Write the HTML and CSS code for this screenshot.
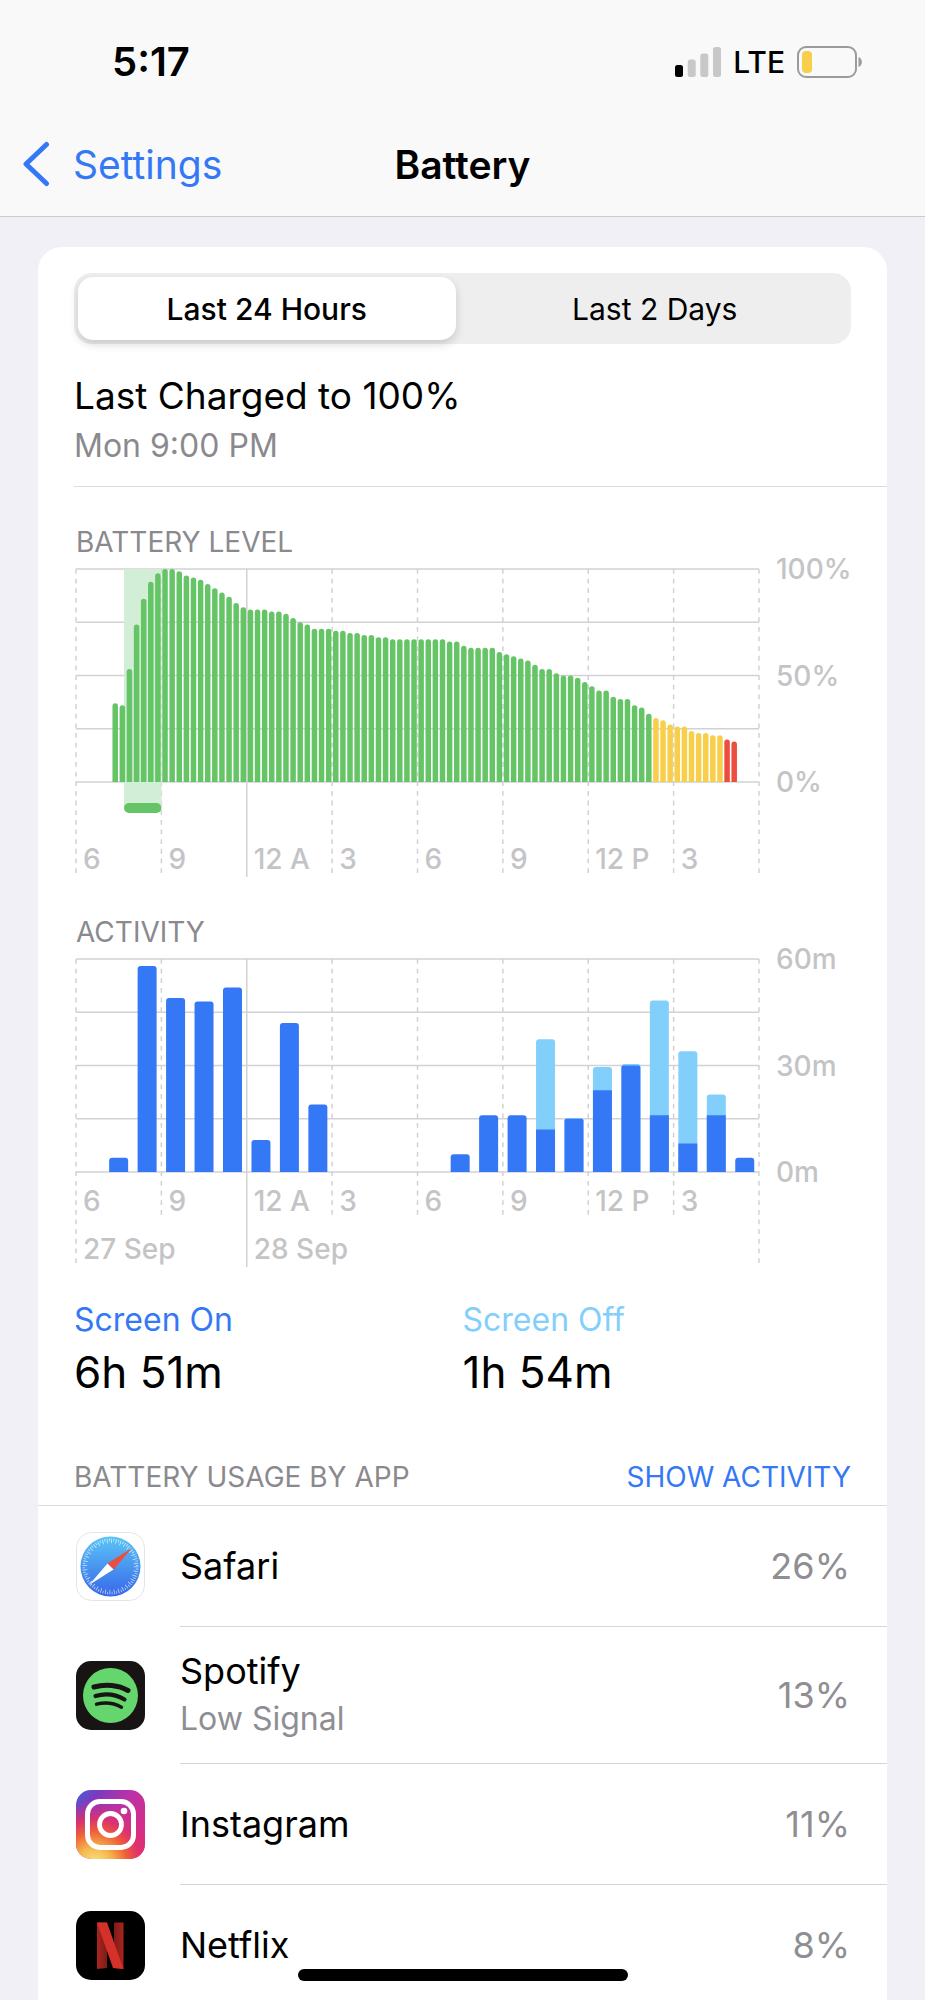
FILE: index.html
```html
<!DOCTYPE html>
<html lang="en">
<head>
    <meta charset="UTF-8">
    <meta name="viewport" content="width=device-width, initial-scale=1.0">
    <title>Battery</title>
    <link rel="stylesheet" href="styles.css">
</head>
<body>
    <div class="screen">
        <header class="top">
            <div class="status-bar">
                <span class="clock">5:17</span>
                <div class="status-icons">
                    <svg class="signal" viewBox="0 0 46 30" aria-hidden="true">
                        <rect x="0" y="18" width="8" height="12" rx="2.5" fill="#000"/>
                        <rect x="12.7" y="12.5" width="8" height="17.5" rx="2.5" fill="#c8c8c8"/>
                        <rect x="25.3" y="6.5" width="8" height="23.5" rx="2.5" fill="#c8c8c8"/>
                        <rect x="38" y="0" width="8" height="30" rx="2.5" fill="#c8c8c8"/>
                    </svg>
                    <span class="network">LTE</span>
                    <svg class="battery-icon" viewBox="0 0 66 32" aria-hidden="true">
                        <rect x="1" y="1" width="58" height="30" rx="8" fill="none" stroke="#9b9b9b" stroke-width="2"/>
                        <rect x="5" y="5" width="10" height="22" rx="4" fill="#f7cf4a"/>
                        <path d="M61.5 11c4.5 1.500 4.500 8.500 0 10z" fill="#9b9b9b"/>
                    </svg>
                </div>
            </div>
            <nav class="nav-bar">
                <a class="back" href="#">
                    <svg class="chevron" viewBox="0 0 28 46" aria-hidden="true">
                        <path d="M24.500 3.500L4 23l20.500 19.500" fill="none" stroke="#3478f6" stroke-width="5" stroke-linecap="round" stroke-linejoin="round"/>
                    </svg>
                    Settings
                </a>
                <h1>Battery</h1>
            </nav>
        </header>

        <main class="card">
            <div class="segments">
                <button class="segment active" type="button">Last 24 Hours</button>
                <button class="segment" type="button">Last 2 Days</button>
            </div>

            <div class="charged">
                <p class="charged-title">Last Charged to 100%</p>
                <p class="charged-time">Mon 9:00 PM</p>
            </div>

            <section class="chart-block">
                <h2>BATTERY LEVEL</h2>
                <div class="chart">
                    <div class="plot">
                        <svg id="level-chart" viewBox="0 0 683 309" aria-hidden="true"></svg>
                        <div class="hours">
                            <span>6</span><span>9</span><span>12 A</span><span>3</span><span>6</span><span>9</span><span>12 P</span><span>3</span>
                        </div>
                    </div>
                    <div class="scale"><span>100%</span><span>50%</span><span>0%</span></div>
                </div>
            </section>

            <section class="chart-block">
                <h2>ACTIVITY</h2>
                <div class="chart">
                    <div class="plot">
                        <svg id="activity-chart" viewBox="0 0 683 309" aria-hidden="true"></svg>
                        <div class="hours">
                            <span>6</span><span>9</span><span>12 A</span><span>3</span><span>6</span><span>9</span><span>12 P</span><span>3</span>
                            <span class="date">27 Sep</span><span class="date">28 Sep</span>
                        </div>
                    </div>
                    <div class="scale"><span>60m</span><span>30m</span><span>0m</span></div>
                </div>
            </section>

            <dl class="totals">
                <div>
                    <dt class="on">Screen On</dt>
                    <dd>6h 51m</dd>
                </div>
                <div>
                    <dt class="off">Screen Off</dt>
                    <dd>1h 54m</dd>
                </div>
            </dl>

            <div class="usage-header">
                <h2>BATTERY USAGE BY APP</h2>
                <button class="show-activity" type="button">SHOW ACTIVITY</button>
            </div>

            <ul class="apps">
                <li>
                    <svg class="app-icon" viewBox="0 0 69 69" aria-hidden="true">
                        <defs>
                            <linearGradient id="safari-blue" x1="0" y1="0" x2="0" y2="1">
                                <stop offset="0" stop-color="#5cc5f5"/>
                                <stop offset="1" stop-color="#3767ea"/>
                            </linearGradient>
                        </defs>
                        <rect x="0.500" y="0.500" width="68" height="68" rx="15" fill="#fff" stroke="#e4e4e6"/>
                        <circle cx="34.500" cy="34.500" r="30" fill="url(#safari-blue)"/>
                        <circle cx="34.500" cy="34.500" r="26.700" fill="none" stroke="#fff" stroke-opacity="0.700" stroke-width="2.600" stroke-dasharray="0.800 1.530"/>
                        <circle cx="34.500" cy="34.500" r="24.500" fill="none" stroke="#fff" stroke-opacity="0.700" stroke-width="2.400" stroke-dasharray="0.800 3.476"/>
                        <path d="M56 16L31.500 31.500l6 6z" fill="#eb4e3d"/>
                        <path d="M13 53l18.500-21.500 6 6z" fill="#fff"/>
                    </svg>
                    <div class="app-row">
                        <div class="app-name">Safari</div>
                        <span class="percent">26%</span>
                    </div>
                </li>
                <li>
                    <svg class="app-icon" viewBox="0 0 69 69" aria-hidden="true">
                        <rect width="69" height="69" rx="15" fill="#191414"/>
                        <circle cx="34.500" cy="34.500" r="27.500" fill="#65d66e"/>
                        <g fill="none" stroke="#191414" stroke-linecap="round">
                            <path d="M18 26c11.500-3.300 24.500-2 34 3.500" stroke-width="5"/>
                            <path d="M19.500 35c9.800-2.800 20.500-1.500 29 3.500" stroke-width="4.200"/>
                            <path d="M20.500 43.200c8.500-2.200 17.500-1.300 25 3" stroke-width="3.400"/>
                        </g>
                    </svg>
                    <div class="app-row">
                        <div class="app-name">Spotify<small>Low Signal</small></div>
                        <span class="percent">13%</span>
                    </div>
                </li>
                <li>
                    <svg class="app-icon" viewBox="0 0 69 69" aria-hidden="true">
                        <defs>
                            <linearGradient id="insta-base" x1="0" y1="0" x2="1" y2="0.700">
                                <stop offset="0" stop-color="#3f63d8"/>
                                <stop offset="0.220" stop-color="#7a3abf"/>
                                <stop offset="0.550" stop-color="#b932a8"/>
                                <stop offset="1" stop-color="#dc2c80"/>
                            </linearGradient>
                            <radialGradient id="insta-warm" cx="0.270" cy="1.080" r="1">
                                <stop offset="0.080" stop-color="#f7d877"/>
                                <stop offset="0.250" stop-color="#f5b84e"/>
                                <stop offset="0.480" stop-color="#ef5f38"/>
                                <stop offset="0.660" stop-color="#e03267" stop-opacity="0.900"/>
                                <stop offset="0.950" stop-color="#d02c90" stop-opacity="0"/>
                            </radialGradient>
                        </defs>
                        <rect width="69" height="69" rx="15" fill="url(#insta-base)"/>
                        <rect width="69" height="69" rx="15" fill="url(#insta-warm)"/>
                        <rect x="11.500" y="11.500" width="46" height="46" rx="12.500" fill="none" stroke="#fff" stroke-width="5"/>
                        <circle cx="34.500" cy="34.500" r="11" fill="none" stroke="#fff" stroke-width="4.800"/>
                        <circle cx="48" cy="21" r="3.300" fill="#fff"/>
                    </svg>
                    <div class="app-row">
                        <div class="app-name">Instagram</div>
                        <span class="percent">11%</span>
                    </div>
                </li>
                <li>
                    <svg class="app-icon" viewBox="0 0 69 69" aria-hidden="true">
                        <defs>
                            <linearGradient id="netflix-left" x1="0" y1="0" x2="1" y2="0">
                                <stop offset="0" stop-color="#a9261f"/>
                                <stop offset="1" stop-color="#7e1b16"/>
                            </linearGradient>
                            <linearGradient id="netflix-right" x1="0" y1="0" x2="1" y2="0">
                                <stop offset="0" stop-color="#7e1b16"/>
                                <stop offset="1" stop-color="#a9261f"/>
                            </linearGradient>
                        </defs>
                        <rect width="69" height="69" rx="15" fill="#000"/>
                        <path d="M21 11.500h10v45.500l-10 1z" fill="url(#netflix-left)"/>
                        <path d="M38 11.500h9.500v46.500l-9.500-1z" fill="url(#netflix-right)"/>
                        <path d="M21 11.500h10l16.500 46.500-10.500-1z" fill="#d5302a"/>
                    </svg>
                    <div class="app-row">
                        <div class="app-name">Netflix</div>
                        <span class="percent">8%</span>
                    </div>
                </li>
            </ul>
        </main>
    </div>
    <div class="home-indicator"></div>

    <script>
        const plotWidth = 683;
        const plotHeight = 213;
        const plotTop = 1;

        // battery level, one bar per 15 minutes
        const levelStart = 5;
        const levels = [
            37, 36, 53, 74, 86, 94, 98, 100, 100, 99, 97, 96, 95, 93, 91, 89, 87, 84, 82, 81,
            81, 81, 80, 80, 79, 77, 75, 74, 72, 72, 72, 71, 71, 70, 70, 69, 69, 68, 68, 67,
            67, 67, 67, 67, 67, 67, 67, 66, 66, 64, 63, 63, 63, 63, 61, 60, 59, 58, 57, 55,
            53, 53, 51, 50, 50, 49, 47, 45, 43, 43, 40, 39, 39, 36, 35, 32, 30, 29, 27, 26,
            26, 24, 23, 23, 22, 22, 20, 19
        ];

        // minutes per hour: [screen on, screen off]
        const activity = [
            [0, 0], [4, 0], [58, 0], [49, 0], [48, 0], [52, 0], [9, 0], [42, 0], [19, 0], [0, 0], [0, 0], [0, 0],
            [0, 0], [5, 0], [16, 0], [16, 0], [12, 25.4], [15, 0.2], [23, 6.6], [30, 0.4], [16, 32.3], [8, 26], [16, 5.8], [4, 0]
        ];

        // grid lines, shortEnd is where the inner dashed lines stop
        function drawGrid(shortEnd) {
            let out = "";
            for (let i = 0; i <= 4; i++) {
                const y = plotTop + i * plotHeight / 4;
                out += `<line class="grid" x1="0" y1="${y}" x2="${plotWidth}" y2="${y}"/>`;
            }
            for (let i = 0; i <= 8; i++) {
                const x = i * plotWidth / 8;
                if (i === 2) {
                    out += `<line class="grid" x1="${x}" y1="${plotTop}" x2="${x}" y2="309"/>`;
                } else {
                    const end = i === 0 || i === 8 ? 305 : shortEnd;
                    out += `<line class="grid dashed" x1="${x}" y1="${plotTop}" x2="${x}" y2="${end}"/>`;
                }
            }
            return out;
        }

        // bar with rounded top corners
        function bar(x, width, height, radius, name) {
            const base = plotTop + plotHeight;
            const r = Math.min(radius, height);
            return `<path class="${name}" d="M${x} ${base}v${-(height - r)}q0 ${-r} ${r} ${-r}h${width - 2 * r}q${r} 0 ${r} ${r}v${height - r}z"/>`;
        }

        function levelColor(level) {
            if (level > 30) return "green";
            if (level > 20) return "yellow";
            return "red";
        }

        function drawLevels() {
            const slot = plotWidth / 96;
            let out = drawGrid(305);
            out += `<rect class="charging" x="48" y="1" width="37.5" height="238"/>`;
            out += `<rect class="green" x="48" y="235" width="37.5" height="10" rx="5"/>`;
            levels.forEach((level, i) => {
                out += bar((levelStart + i) * slot + 0.9, 5.5, level / 100 * plotHeight, 2.7, levelColor(level));
            });
            document.getElementById("level-chart").innerHTML = out;
        }

        function drawActivity() {
            const slot = plotWidth / 24;
            let out = drawGrid(257);
            activity.forEach(([on, off], i) => {
                const x = i * slot + 4.7;
                const total = (on + off) / 60 * plotHeight;
                if (off > 0) {
                    out += bar(x, 19, total, 3, "light");
                    out += bar(x, 19, on / 60 * plotHeight, off < 1 ? 2 : 0, "blue");
                } else if (on > 0) {
                    out += bar(x, 19, total, 3, "blue");
                }
            });
            document.getElementById("activity-chart").innerHTML = out;
        }

        drawLevels();
        drawActivity();
    </script>
</body>
</html>
```
FILE: styles.css
```css
* {
    box-sizing: border-box;
}

body {
    margin: 0;
    font-family: Inter, "Liberation Sans", sans-serif;
    background-color: #f1f0f6;
    color: #000;
}

h1, h2, p, ul, dl, dd {
    margin: 0;
    padding: 0;
}

button {
    padding: 0;
    border: none;
    background: none;
    font-family: inherit;
    color: inherit;
    cursor: pointer;
}

.screen {
    height: 100vh;
    overflow: hidden;
}

/* status bar and navigation */
.top {
    background-color: #f9f9f9;
    border-bottom: 1px solid #cbcbcd;
    padding-bottom: 11px;
}

.status-bar {
    display: flex;
    justify-content: space-between;
    align-items: center;
    height: 123px;
    padding: 0 62px 0 112px;
}

.clock {
    font-size: 40px;
    font-weight: 600;
}

.status-icons {
    display: flex;
    align-items: center;
    gap: 12px;
}

.signal {
    width: 46px;
    height: 30px;
}

.network {
    font-size: 30px;
    font-weight: 500;
}

.battery-icon {
    width: 66px;
    height: 32px;
}

.nav-bar {
    display: grid;
    grid-template-columns: 1fr auto 1fr;
    align-items: center;
    height: 82px;
    padding: 0 22px;
}

.back {
    display: flex;
    align-items: center;
    gap: 23px;
    color: #3478f6;
    font-size: 39px;
    text-decoration: none;
}

.chevron {
    width: 28px;
    height: 46px;
}

h1 {
    font-size: 39px;
    font-weight: 600;
}

.card {
    margin: 30px 38px 0;
    padding-top: 26px;
    background-color: #fff;
    border-radius: 24px 24px 0 0;
}

.segments {
    display: grid;
    grid-template-columns: 1fr 1fr;
    height: 71px;
    margin: 0 36px;
    padding: 4px;
    background-color: #eee;
    border-radius: 18px;
}

.segment {
    border-radius: 15px;
    font-size: 30px;
}

.segment.active {
    margin-right: 7px;
    background-color: #fff;
    font-weight: 500;
    box-shadow: 0 4px 10px rgba(0, 0, 0, 0.16);
}

.charged {
    margin-left: 36px;
    padding: 27px 0 15px;
    border-bottom: 1px solid #dcdcde;
    line-height: 50px;
}

.charged-title {
    font-size: 37px;
}

.charged-time {
    font-size: 32px;
    color: #8a8a8e;
}

h2 {
    font-size: 28px;
    font-weight: 400;
    line-height: 36px;
    color: #8a8a8e;
}

/* charts */
.chart-block {
    margin: 37px 36px 0 38px;
}

.chart {
    display: grid;
    grid-template-columns: 1fr 75px;
    gap: 17px;
    margin-top: 8px;
    color: #c4c4c6;
    font-size: 28px;
    font-weight: 500;
    line-height: 36px;
}

.plot {
    display: grid;
}

.plot svg {
    grid-area: 1 / 1;
    display: block;
    width: 100%;
    overflow: visible;
}

.hours {
    grid-area: 1 / 1;
    align-self: end;
    display: grid;
    grid-template-columns: repeat(8, 1fr);
    row-gap: 12px;
}

.hours span {
    padding-left: 7px;
    white-space: nowrap;
}

.hours .date {
    grid-column: span 2;
}

.scale {
    display: flex;
    flex-direction: column;
    justify-content: space-between;
    height: 249px;
    margin-top: -17px;
}

.grid {
    stroke: #d2d2d4;
    stroke-width: 1.5;
}

.dashed {
    stroke-dasharray: 4.8 4.85;
}

.charging {
    fill: #d3eed6;
}

.green {
    fill: #65c466;
}

.yellow {
    fill: #f7cf4a;
}

.red {
    fill: #eb4e3d;
}

.blue {
    fill: #3478f6;
}

.light {
    fill: #83cffb;
}

.totals {
    display: grid;
    grid-template-columns: 1fr 1fr;
    margin: 30px 36px 0;
}

.totals dt {
    font-size: 32px;
    line-height: 46px;
}

.totals .on {
    color: #3478f6;
}

.totals .off {
    color: #83cffb;
}

.totals dd {
    font-size: 44px;
    line-height: 58px;
}

/* usage list */
.usage-header {
    display: flex;
    justify-content: space-between;
    margin-top: 58px;
    padding: 0 36px 10px;
    border-bottom: 1px solid #dcdcde;
}

.show-activity {
    font-size: 28px;
    line-height: 36px;
    color: #3478f6;
}

.apps {
    list-style: none;
}

.apps li {
    display: flex;
    align-items: center;
    gap: 35px;
    padding-left: 38px;
}

.app-icon {
    flex: none;
    width: 69px;
    height: 69px;
}

.app-row {
    flex: 1;
    display: flex;
    justify-content: space-between;
    align-items: center;
    min-height: 121px;
    padding: 20px 37px 20px 0;
    border-bottom: 1px solid #d6d6d8;
    font-size: 36px;
    line-height: 48px;
}

.app-name small {
    display: block;
    font-size: 32px;
    color: #8e8e93;
}

.percent {
    color: #8e8e93;
}

.home-indicator {
    position: fixed;
    bottom: 19px;
    left: 50%;
    width: 330px;
    height: 12px;
    margin-left: -165px;
    border-radius: 6px;
    background-color: #000;
}
```
